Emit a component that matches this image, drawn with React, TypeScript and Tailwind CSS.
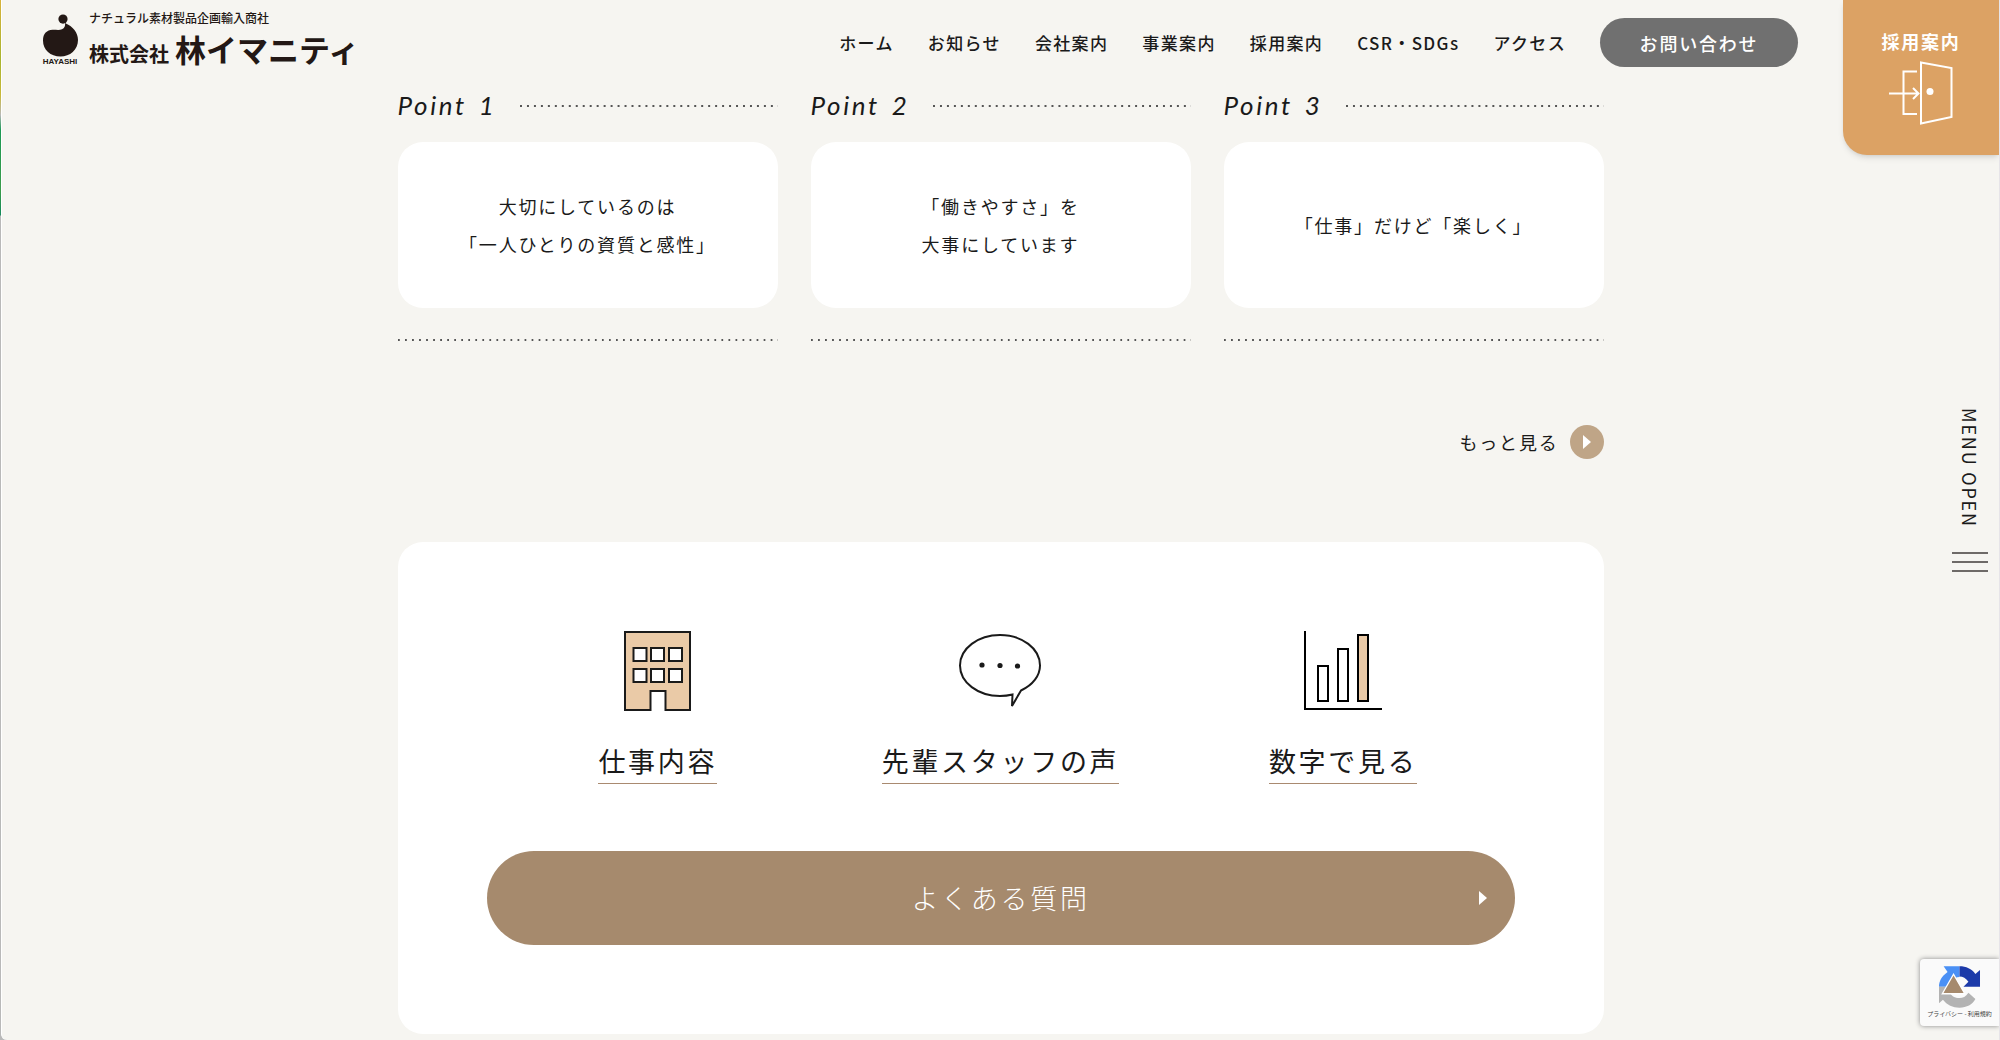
import type { ReactNode } from 'react';

const navItems = ['ホーム', 'お知らせ', '会社案内', '事業案内', '採用案内', 'CSR・SDGs', 'アクセス'];

const points = [
  { no: 1, lines: ['大切にしているのは', '「一人ひとりの資質と感性」'] },
  { no: 2, lines: ['「働きやすさ」を', '大事にしています'] },
  { no: 3, lines: ['「仕事」だけど「楽しく」'] },
];

function Dots({ className = '' }: { className?: string }) {
  return (
    <div
      className={`h-0.5 bg-[linear-gradient(90deg,#555_2px,transparent_2px)] bg-[length:7px_2px] bg-repeat-round ${className}`}
    />
  );
}

function Triangle() {
  return (
    <svg viewBox="0 0 8 14" className="h-3.5 w-2 fill-white" aria-hidden="true">
      <path d="M0 0 8 7 0 14Z" />
    </svg>
  );
}

function Logo() {
  return (
    <a href="#" className="flex items-start gap-[11px] text-[#231815]">
      <div className="w-9 pt-3.5 text-center">
        <svg viewBox="0 0 35 42" className="mx-auto h-[43px] w-[35px] fill-current" aria-hidden="true">
          <circle cx="20" cy="4.6" r="4.6" />
          <path d="M22 8.5C30 12 35 18 35 25.5C35 35.5 27 42 17.5 42C7.5 42 0 35.5 0 26C0 19 4 15.5 9.5 15.3C13.5 15.2 16 16 19 14.8C21.5 13.7 22.5 11 22 8.5Z" />
        </svg>
        <p className="text-[8px]/[10px] font-bold font-['Liberation_Sans',sans-serif]">HAYASHI</p>
      </div>
      <div className="pt-2">
        <p className="text-xs/5 font-medium whitespace-nowrap">ナチュラル素材製品企画輸入商社</p>
        <p className="flex items-baseline gap-1.5 font-bold whitespace-nowrap">
          <span className="text-xl/[42px]">株式会社</span>
          <span className="text-[31px]/[42px]">林イマニティ</span>
        </p>
      </div>
    </a>
  );
}

function RecruitTab() {
  return (
    <a
      href="#"
      className="absolute top-0 right-0 flex h-[155px] w-[156px] flex-col items-center rounded-bl-3xl bg-[#dca264] pt-[27px] text-lg/7 font-bold tracking-widest text-white shadow-md"
    >
      採用案内
      <svg viewBox="0 0 64 64" className="mt-1.5 size-16 fill-none stroke-white stroke-2" aria-hidden="true">
        <path d="M32 1.5 62.5 7V56L32 62.5Z" />
        <path d="M28 10.5H14.5V53H28M0 32.5H28M24 27 29.5 32.5 24 38" />
        <circle cx="41" cy="30.5" r="3.5" className="fill-white stroke-none" />
      </svg>
    </a>
  );
}

function PointCard({ no, lines }: { no: number; lines: string[] }) {
  return (
    <section>
      <div className="flex items-center">
        <h2 className="flex w-[122px] gap-3 pb-0.5 text-[26px]/[26px] tracking-widest italic font-['Lato',sans-serif]">
          <span>Point</span> <span>{no}</span>
        </h2>
        <Dots className="flex-1" />
      </div>
      <div className="mt-[22px] flex h-[166px] flex-col items-center justify-center rounded-[25px] bg-white text-lg/[38px] tracking-widest">
        {lines.map((line) => (
          <p key={line}>{line}</p>
        ))}
      </div>
      <Dots className="mt-[31px]" />
    </section>
  );
}

function BuildingIcon() {
  return (
    <svg viewBox="0 0 67 80" className="h-20 w-[67px] fill-[#eacaa7] stroke-[#1a1a1a] stroke-2" aria-hidden="true">
      <path d="M1 1H66V79H41.5V60H26.5V79H1Z" />
      <g className="fill-white">
        {[17, 38].map((y) => [9.5, 27, 45].map((x) => <rect key={`${x}-${y}`} x={x} y={y} width="13" height="13" />))}
      </g>
    </svg>
  );
}

function BubbleIcon() {
  return (
    <svg viewBox="0 0 82 80" className="h-20 w-[82px] fill-none stroke-[#1a1a1a] stroke-2" aria-hidden="true">
      <path d="M53.5 63.5C49.5 64.5 45.5 65 41 65C19 65 1 51.5 1 34.5C1 17.5 19 4 41 4C63 4 81 17.5 81 34.5C81 44.5 74 54 62 59.5L53 75Z" />
      <g className="fill-[#1a1a1a] stroke-none">
        <circle cx="23" cy="34" r="2.6" />
        <circle cx="41" cy="34.5" r="2.6" />
        <circle cx="58.5" cy="35" r="2.6" />
      </g>
    </svg>
  );
}

function ChartIcon() {
  return (
    <svg viewBox="0 0 78 80" className="h-20 w-[78px] fill-none stroke-black stroke-2" aria-hidden="true">
      <path d="M1 0V78H78" />
      <rect x="14" y="35" width="10" height="35" />
      <rect x="34" y="18" width="10" height="52" />
      <rect x="54" y="4" width="10" height="66" className="fill-[#eacaa7]" />
    </svg>
  );
}

function FeatureLink({ icon, label }: { icon: ReactNode; label: string }) {
  return (
    <a href="#" className="flex flex-col items-center gap-[30px]">
      {icon}
      <span className="border-b border-[#a98a70] pb-0.5 text-[27px]/10 tracking-widest whitespace-nowrap">{label}</span>
    </a>
  );
}

function SideMenu() {
  return (
    <button type="button" className="absolute top-[408px] right-[11px] flex w-9 flex-col items-center">
      <span className="text-lg/6 tracking-widest [writing-mode:vertical-rl]">MENU OPEN</span>
      <span className="mt-6 flex w-full flex-col gap-[7px]">
        <span className="h-0.5 bg-[#6e6a68]" />
        <span className="h-0.5 bg-[#6e6a68]" />
        <span className="h-0.5 bg-[#6e6a68]" />
      </span>
    </button>
  );
}

function CaptchaBadge() {
  return (
    <div className="absolute right-0 bottom-3.5 flex h-[67px] w-[79px] flex-col items-center rounded-l-sm bg-[#fafafa] pt-1.5 shadow-[0_0_5px_#888]">
      <svg viewBox="116 76 128 130" className="size-[43px]" aria-hidden="true">
        <path fill="#4a90f5" d="M132 80H180V112C170 112 164 116 158 124L142 142H118C118 124 126 110 144 97Z" />
        <path fill="#1c3aa9" d="M180 80C200 80 217 88 228 103L242 91V142H192L207 127C200 116 190 111 180 111Z" />
        <path fill="#b3b3b3" d="M118 142V192L130 181C142 197 160 205 180 205C202 205 219 196 228 179L207 160C199 172 190 176 180 176C165 176 157 170 151 160L168 142Z" />
        <path fill="#a68a6d" stroke="#fff" strokeWidth="4" d="M162 104 196 163H128Z" />
      </svg>
      <p className="text-[6px]/3 whitespace-nowrap text-[#444]">
        <a href="#">プライバシー</a> - <a href="#">利用規約</a>
      </p>
    </div>
  );
}

export default function App() {
  return (
    <div className="bg-[#b9b9b9] bg-[linear-gradient(#d8b33c,#a9b52f_60px,#c9b93a_95px,#b9b9b9_115px,#1d9a55_130px,#3b9c4a_190px,#128a5a_215px,#b9b9b9_216px)] pl-px">
      <div className="relative min-h-screen overflow-hidden rounded-bl-md border-x border-l-white border-r-[#e6e4e8] bg-[#f6f5f1] pb-1.5 text-[#1a1a1a] font-['Noto_Sans_CJK_JP',sans-serif]">
        <header className="flex h-[92px] items-start justify-between pr-[201px] pl-10">
          <Logo />
          <nav className="flex items-center gap-[34px] pt-[18px] text-[17px] font-medium tracking-[0.08em] whitespace-nowrap">
            {navItems.map((item) => (
              <a key={item} href="#">
                {item}
              </a>
            ))}
            <a
              href="#"
              className="flex h-[49px] w-[198px] items-center justify-center rounded-full bg-[#707070] text-lg font-medium tracking-widest text-white"
            >
              お問い合わせ
            </a>
          </nav>
        </header>

        <main className="mx-auto w-full max-w-[1206px]">
          <div className="grid grid-cols-3 gap-[33px]">
            {points.map((point) => (
              <PointCard key={point.no} {...point} />
            ))}
          </div>

          <div className="mt-[84px] flex justify-end">
            <a href="#" className="flex items-center gap-[11px] text-lg tracking-widest">
              もっと見る
              <span className="flex size-[34px] items-center justify-center rounded-full bg-[#bfa587]">
                <Triangle />
              </span>
            </a>
          </div>

          <div className="mt-[83px] rounded-[25px] bg-white p-[89px]">
            <div className="grid grid-cols-3">
              <FeatureLink icon={<BuildingIcon />} label="仕事内容" />
              <FeatureLink icon={<BubbleIcon />} label="先輩スタッフの声" />
              <FeatureLink icon={<ChartIcon />} label="数字で見る" />
            </div>
            <a
              href="#"
              className="mt-[67px] grid h-[94px] grid-cols-[1fr_auto_1fr] items-center rounded-full bg-[#a68a6d] px-7 text-[27px] font-light tracking-widest text-white"
            >
              <span className="col-start-2">よくある質問</span>
              <span className="flex justify-end">
                <Triangle />
              </span>
            </a>
          </div>
        </main>

        <RecruitTab />
        <SideMenu />
        <CaptchaBadge />
      </div>
    </div>
  );
}
